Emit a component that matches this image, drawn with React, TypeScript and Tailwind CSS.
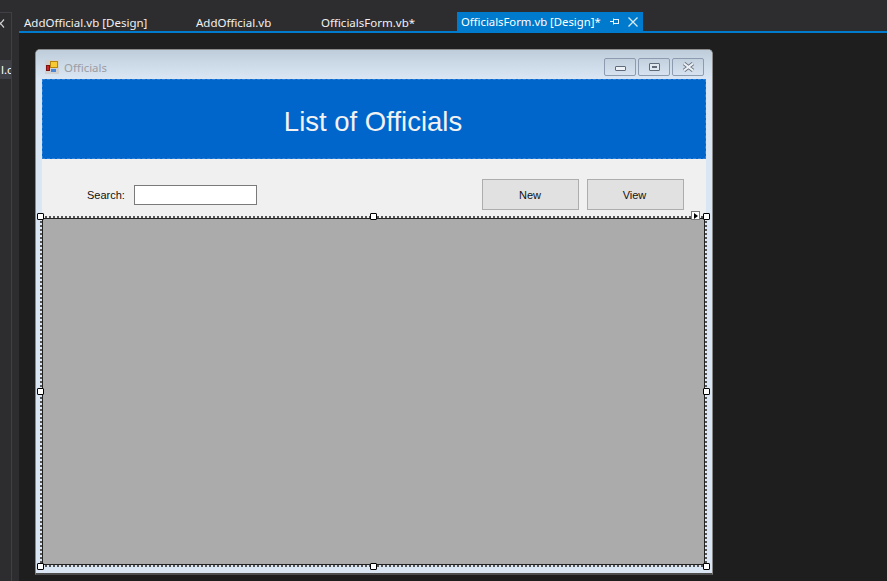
const handle = 'absolute w-[7px] h-[7px] bg-white border border-black rounded-[1px] z-10';

function CaptionButton({ children }: { children: React.ReactNode }) {
  return (
    <div className="w-[32px] h-[18px] flex items-center justify-center rounded-[2px] border border-[#8c9bb0] bg-gradient-to-b from-[#c3d0de] to-[#d6e2ef]">
      {children}
    </div>
  );
}

function Tab({ label, width }: { label: string; width: string }) {
  return <div className={`${width} pl-[5px] pt-[14px] text-[11.5px] leading-[17px] text-[#f1f1f1] whitespace-nowrap`}>{label}</div>;
}

export default function App() {
  return (
    <div className="w-[887px] h-[581px] overflow-hidden flex bg-[#1e1e1e] font-['Noto_Sans',sans-serif]">
      {/* tool window strip */}
      <div className="w-[19px] h-full bg-[#2d2d30] flex flex-col shrink-0">
        <div className="h-[12px]" />
        <div className="w-[12px] flex-1 border-t border-r border-[#3f3f46] overflow-hidden">
          <div className="h-[47px] pt-[6px]">
            <svg width="5" height="9" viewBox="0 0 5 9" fill="none" stroke="#d0d0d0" strokeWidth="1.200">
              <path d="M-3 0.500l7 8M4 0.500l-7 8" />
            </svg>
          </div>
          <div className="h-[19px] w-[11px] bg-[#3f3f46] text-white text-[11.4px] leading-[19px] whitespace-nowrap overflow-hidden pl-[1px]">l.c</div>
        </div>
      </div>

      <div className="flex-1 flex flex-col">
        {/* document tabs */}
        <div className="h-[31px] bg-[#2d2d30] flex shrink-0">
          <Tab label="AddOfficial.vb [Design]" width="w-[172px]" />
          <Tab label="AddOfficial.vb" width="w-[125px]" />
          <Tab label="OfficialsForm.vb*" width="w-[141px]" />
          <div className="mt-[12px] h-[19px] w-[186px] bg-[#007acc] text-white text-[11.3px] leading-[19px] pl-[4px] flex items-center whitespace-nowrap">
            <span className="w-[149px]">OfficialsForm.vb [Design]*</span>
            <svg width="9" height="9" viewBox="0 0 9 9" className="mr-[9px]" fill="none" stroke="#e8f3fb" strokeWidth="1">
              <path d="M0 4.500h3M3.500 1.500v6M3.500 2.500h5M3.500 6.500h5M8.500 2v5" />
            </svg>
            <svg width="10" height="10" viewBox="0 0 10 10" fill="none" stroke="#d8ecf8" strokeWidth="1.300">
              <path d="M0.500 0.500l9 9M9.500 0.500l-9 9" />
            </svg>
          </div>
        </div>
        <div className="h-[2px] bg-[#007acc] shrink-0" />

        {/* designer surface */}
        <div className="flex-1 pl-[16px] pt-[16px]">
          <div className="w-[678px] h-[526px] rounded-t-[5px] border border-[#8a8a8a] border-b-2 border-b-[#4d4d4d] bg-[#dae6f3] px-[6px] pb-[8px] flex flex-col">
            {/* title bar */}
            <div className="h-[29px] -mx-[6px] pl-[9px] pr-[8px] rounded-t-[4px] bg-gradient-to-b from-[#bfcddb] to-[#dae6f3] flex items-start shrink-0">
              <svg width="14" height="14" viewBox="0 0 14 14" className="mr-[5px] mt-[10px]">
                <rect x="0" y="0" width="14" height="14" fill="#d0d0d0" />
                <rect x="5.500" y="1.500" width="7" height="6" fill="#f6c935" stroke="#b8860b" strokeWidth="1" />
                <rect x="1.500" y="5.500" width="3" height="5" fill="#c8262a" stroke="#7c1414" strokeWidth="1" />
                <rect x="6" y="9" width="5" height="3" fill="#4a86d8" />
              </svg>
              <span className="text-[11.4px] leading-[17px] mt-[9px] text-[#9a9da4]">Officials</span>
              <div className="ml-auto flex gap-[2px] mt-[8px]">
                <CaptionButton>
                  <div className="w-[11px] h-[5px] rounded-[1px] bg-[#eef2f6] border border-[#5f6b7a] mt-[3px]" />
                </CaptionButton>
                <CaptionButton>
                  <div className="w-[11px] h-[8px] rounded-[1px] border border-[#5f6b7a] bg-[#dfe7ef] flex items-center justify-center -mt-[1px]">
                    <div className="w-[5px] h-[2px] bg-[#5f6b7a]" />
                  </div>
                </CaptionButton>
                <CaptionButton>
                  <svg width="13" height="10" viewBox="0 0 13 10" fill="none">
                    <path d="M2 1.500l9 7M11 1.500l-9 7" stroke="#6a7380" strokeWidth="3.800" />
                    <path d="M2 1.500l9 7M11 1.500l-9 7" stroke="#eef2f6" strokeWidth="2.200" />
                  </svg>
                </CaptionButton>
              </div>
            </div>

            {/* header panel */}
            <div className="h-[80px] bg-[#0066cc] border border-dashed border-[#2f80d8] flex items-center justify-center shrink-0 pr-[2px]">
              <span className="font-['Liberation_Sans',sans-serif] text-[27.5px] text-[#f2f2f2] mt-[6px]">List of Officials</span>
            </div>

            {/* form body */}
            <div className="flex-1 bg-[#f0f0f0] flex flex-col">
              <div className="h-[57px] flex items-start shrink-0 pt-[20px] font-['Liberation_Sans',sans-serif] text-[11px] text-[#111]">
                <span className="w-[37px] ml-[45px] mt-[9px] leading-[14px] whitespace-nowrap">Search:</span>
                <div className="ml-[10px] mt-[6px] w-[123px] h-[20px] bg-white border border-[#7a7a7a]" />
                <div className="ml-[225px] w-[97px] h-[31px] pt-[2px] pr-[1px] bg-[#e1e1e1] border border-[#adadad] flex items-center justify-center">New</div>
                <div className="ml-[8px] w-[97px] h-[31px] pt-[2px] pr-[2px] bg-[#e1e1e1] border border-[#adadad] flex items-center justify-center">View</div>
              </div>

              {/* selected data grid */}
              <div className="relative flex-1 -ml-[2px] -mr-[1px] -mb-[2px] border-2 border-dotted border-[#555]">
                <div className="w-full h-full bg-[#ababab] border border-[#222]" />
                <div className={`${handle} -left-[5px] -top-[5px]`} />
                <div className={`${handle} left-[328px] -top-[5px]`} />
                <div className={`${handle} -right-[5px] -top-[5px]`} />
                <div className={`${handle} -left-[5px] top-[170px]`} />
                <div className={`${handle} -right-[5px] top-[170px]`} />
                <div className={`${handle} -left-[5px] -bottom-[5px]`} />
                <div className={`${handle} left-[328px] -bottom-[5px]`} />
                <div className={`${handle} -right-[5px] -bottom-[5px]`} />
                <div className="absolute right-[5px] -top-[7px] w-[9px] h-[9px] bg-white border border-[#777] flex items-center justify-center z-10">
                  <div className="w-0 h-0 border-y-[3px] border-y-transparent border-l-[4px] border-l-black" />
                </div>
              </div>
            </div>
          </div>
        </div>
      </div>
    </div>
  );
}
